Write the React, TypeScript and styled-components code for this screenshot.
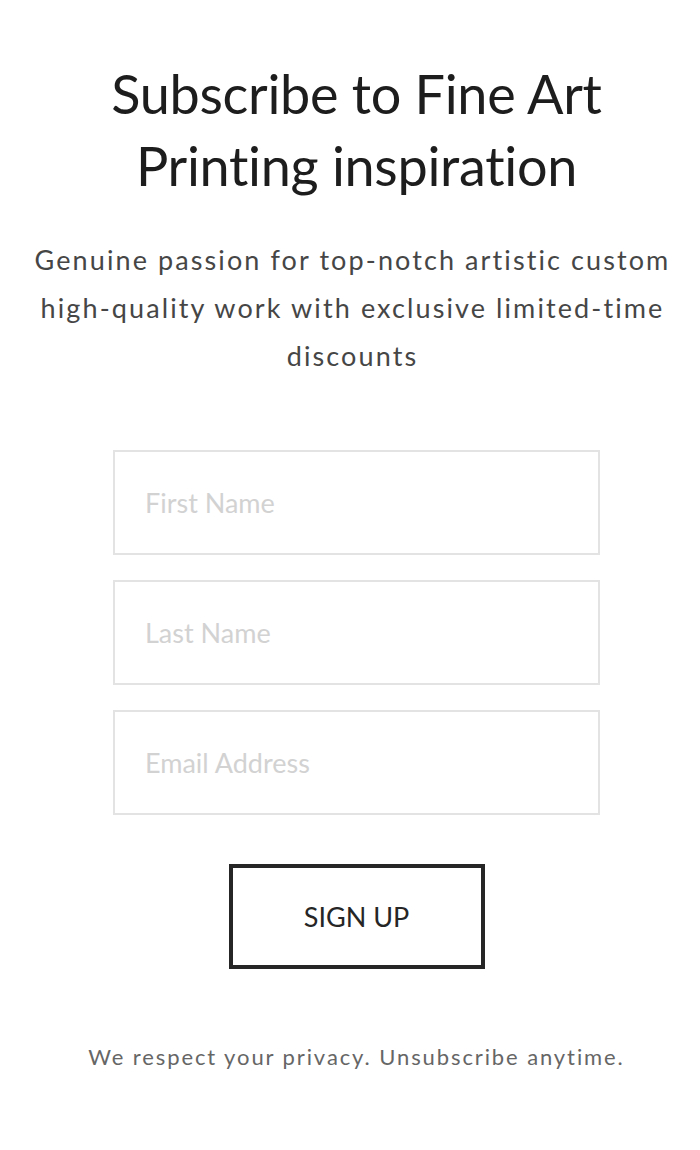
import React from "react";
import styled, { createGlobalStyle } from "styled-components";

const Global = createGlobalStyle`
  html, body { margin: 0; padding: 0; background: #fff; }
  body { font-family: Lato, "Open Sans", sans-serif; }
`;

const Page = styled.div`
  display: flex;
  flex-direction: column;
  align-items: center;
  padding: 58px 0 60px 13px;
  box-sizing: border-box;
  width: 700px;
`;

const Title = styled.h1`
  margin: 0;
  font-family: Lato, sans-serif;
  font-weight: 400;
  font-size: 54px;
  line-height: 72px;
  color: #1d1d1d;
  text-align: center;
  letter-spacing: -0.3px;
`;

const Lead = styled.p`
  margin: 34px 0 0 -8px;
  font-family: Lato, sans-serif;
  font-size: 27px;
  line-height: 48px;
  letter-spacing: 2.1px;
  color: #464646;
  text-align: center;
  width: 660px;
`;

const Form = styled.form`
  display: flex;
  flex-direction: column;
  align-items: center;
  gap: 25px;
  margin-top: 70px;
`;

const Field = styled.input`
  width: 487px;
  height: 105px;
  box-sizing: border-box;
  border: 2px solid #e3e3e3;
  padding: 0 30px;
  font-family: Lato, sans-serif;
  font-size: 27px;
  color: #333;
  outline: none;
  background: #fff;
  &::placeholder { color: #d2d2d2; }
`;

const Button = styled.button`
  margin-top: 24px;
  width: 256px;
  height: 105px;
  box-sizing: border-box;
  border: 4px solid #262626;
  background: #fff;
  font-family: Lato, sans-serif;
  font-size: 27px;
  color: #262626;
  cursor: pointer;
`;

const Note = styled.p`
  margin: 74px 0 0;
  font-family: Lato, sans-serif;
  font-size: 22px;
  letter-spacing: 1.9px;
  color: #666;
  text-align: center;
`;

export default function App() {
  return (
    <>
      <Global />
      <Page>
        <Title>
          Subscribe to Fine Art
          <br />
          Printing inspiration
        </Title>
        <Lead>
          Genuine passion for top-notch artistic custom high-quality work with
          exclusive limited-time discounts
        </Lead>
        <Form onSubmit={(e) => e.preventDefault()}>
          <Field placeholder="First Name" />
          <Field placeholder="Last Name" />
          <Field placeholder="Email Address" />
          <Button type="submit">SIGN UP</Button>
        </Form>
        <Note>We respect your privacy. Unsubscribe anytime.</Note>
      </Page>
    </>
  );
}
